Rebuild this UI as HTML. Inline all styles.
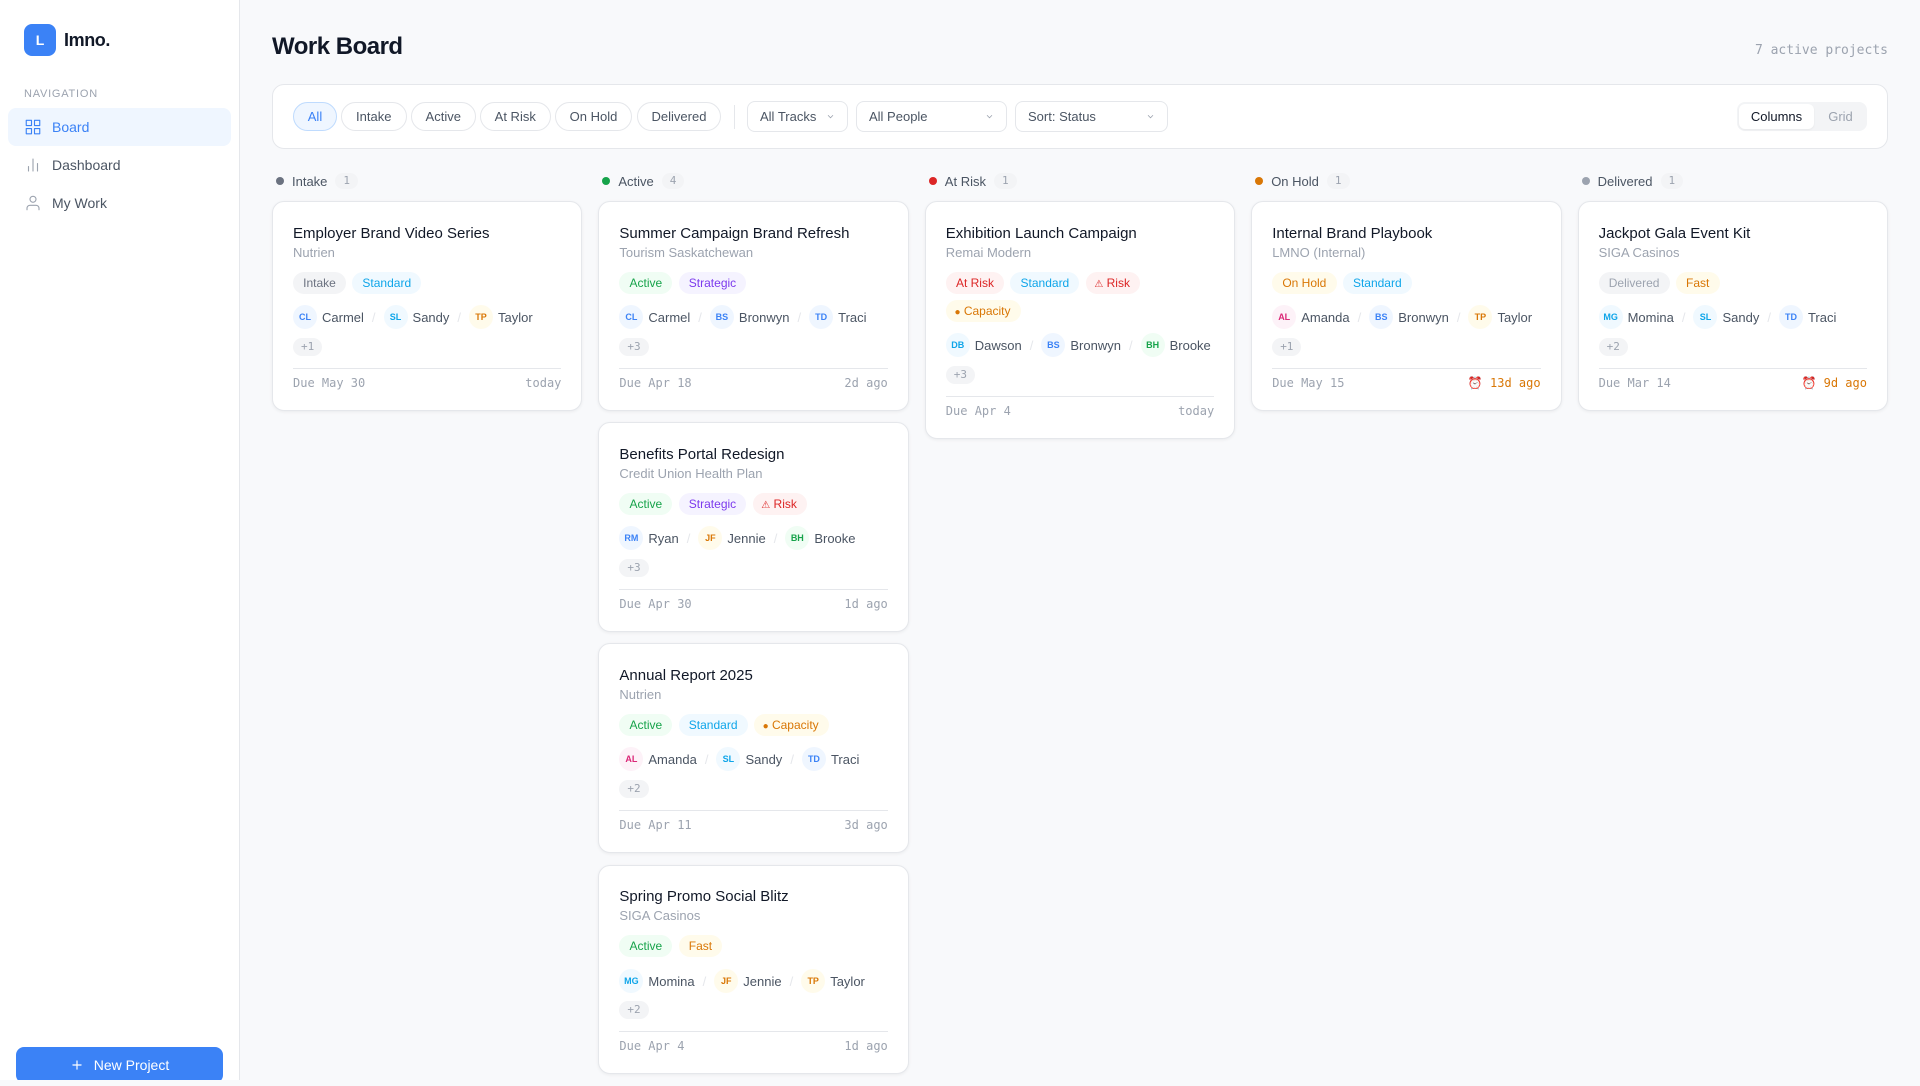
<!DOCTYPE html>
<html lang="en"><head><meta charset="utf-8"><title>Work Board</title>
<style>
*{box-sizing:border-box;margin:0;padding:0}
html,body{width:1920px;height:1080px;overflow:hidden;background:#f8f9fb;font-family:"Liberation Sans",sans-serif;color:#111827}
.side{position:absolute;left:0;top:0;width:240px;height:1080px;background:#fff;border-right:1px solid #e5e7eb;overflow:hidden}
.logo{position:absolute;left:24px;top:24px;width:32px;height:32px;border-radius:8px;background:#3b82f6;color:#fff;font-weight:700;font-size:14px;display:flex;align-items:center;justify-content:center}
.brand{position:absolute;left:64px;top:29px;font-size:18px;line-height:22px;font-weight:700;letter-spacing:-.4px}
.navl{position:absolute;left:24px;top:88px;font-size:11px;line-height:13px;letter-spacing:.77px;color:#9ca3af}
.nav{position:absolute;left:8px;width:223px;height:38px;border-radius:8px;display:flex;align-items:center;padding-left:16px;gap:10px;font-size:14px;color:#4b5563}
.nav svg{width:18px;height:18px;fill:none;stroke:#9ca3af;stroke-width:1.5;stroke-linecap:round;stroke-linejoin:round}
.nav.on{background:#eff6ff;color:#3b82f6}.nav.on svg{stroke:#3b82f6}
.new{position:absolute;left:16px;top:1047px;width:207px;height:36px;border-radius:8px;background:#3b82f6;color:#fff;font-size:14px;display:flex;align-items:center;justify-content:center;gap:10px}
.new svg{width:14px;height:14px;fill:none;stroke:#fff;stroke-width:2;stroke-linecap:round}
h1{position:absolute;left:272px;top:33px;font-size:24px;line-height:28px;font-weight:700;letter-spacing:-.5px}
.count{position:absolute;right:32px;top:43px;font:13px/15px "DejaVu Sans Mono",monospace;color:#9ca3af}
.bar{position:absolute;left:272px;top:84px;width:1616px;height:65px;background:#fff;border:1px solid #e5e7eb;border-radius:12px}
.p{position:absolute;top:17px;height:29px;border:1px solid #e5e7eb;border-radius:15px;font-size:13px;line-height:27px;text-align:center;color:#4b5563;background:#fff}
.p.on{background:#eff6ff;border-color:#bfdbfe;color:#3b82f6}
.div{position:absolute;left:461px;top:20px;width:1px;height:24px;background:#e5e7eb}
.s{position:absolute;top:16px;height:31px;border:1px solid #e5e7eb;border-radius:8px;font-size:13px;line-height:29px;padding-left:12px;color:#4b5563;background:#fff}
.s svg{position:absolute;right:13px;top:12px;width:7px;height:5px;fill:none;stroke:#9ca3af;stroke-width:1}
.seg{position:absolute;left:1464px;top:17px;width:130px;height:29px;background:#f3f4f6;border-radius:8px}
.seg b{position:absolute;top:2px;height:25px;font-weight:400;font-size:13px;line-height:25px;text-align:center;border-radius:6px}
.col{position:absolute;top:173px;width:310.4px}
.ch{height:16px;display:flex;align-items:center;padding-left:4px;gap:8px;font-size:13px;color:#4b5563;margin-bottom:12.3px}
.dot{width:8px;height:8px;border-radius:50%}
.n{font:11px/16px "DejaVu Sans Mono",monospace;color:#9ca3af;background:#f3f4f6;border-radius:8px;padding:0 8px;height:16px}
.card{background:#fff;border:1px solid #e5e7eb;border-radius:12px;box-shadow:0 1px 3px rgba(0,0,0,.06);padding:21.5px 20px 20px;margin-bottom:11.6px;height:209.5px}
.card.tall{height:237.5px}
.t{font-size:15px;line-height:20px;color:#111827;white-space:nowrap}
.c{font-size:13px;line-height:15px;margin-top:1px;color:#9ca3af;white-space:nowrap}
.tags{display:flex;flex-wrap:wrap;gap:6px 6.3px;margin-top:12px}
.tag{height:22px;line-height:22px;font-size:12px;padding:0 10.15px;border-radius:11px;white-space:nowrap}
.gy{background:#f3f4f6;color:#6b7280}.gl{background:#f3f4f6;color:#9ca3af}.sk{background:#f0f9ff;color:#0ea5e9}.gr{background:#f0fdf4;color:#16a34a}
.pu{background:#f5f3ff;color:#7c3aed}.rd{background:#fef2f2;color:#dc2626}.am{background:#fffbeb;color:#d97706}
.bl{background:#eff6ff;color:#3b82f6}.pk{background:#fdf2f8;color:#db2777}
.tag i{font-style:normal;font-size:10px;margin-left:-1.5px}
.pp{display:flex;align-items:center;gap:8px;margin-top:12px;height:24px;white-space:nowrap;font-size:13px;color:#4b5563}
.pe{display:flex;align-items:center;gap:5px}
.av{position:relative;top:-.5px;width:24px;height:24px;border-radius:50%;font-size:9px;font-weight:700;display:flex;align-items:center;justify-content:center}
.sl{color:#e5e7eb}
.mo{display:block;width:max-content;margin-top:8px;height:18px;font:11px/18px "DejaVu Sans Mono",monospace;color:#9ca3af;background:#f3f4f6;border-radius:9px;padding:0 8px}
.f{display:flex;justify-content:space-between;margin-top:12px;border-top:1px solid #e5e7eb;padding-top:7px;font:12px/14px "DejaVu Sans Mono",monospace;color:#9ca3af;white-space:nowrap}
.f .o{color:#d97706}
</style></head><body>
<aside class="side">
<div class="logo">L</div><div class="brand">Imno.</div><div class="navl">NAVIGATION</div>
<div class="nav on" style="top:108px"><svg viewBox="0 0 24 24"><rect x="3" y="3" width="7" height="7"/><rect x="14" y="3" width="7" height="7"/><rect x="14" y="14" width="7" height="7"/><rect x="3" y="14" width="7" height="7"/></svg>Board</div>
<div class="nav" style="top:146px"><svg viewBox="0 0 24 24"><path d="M18 20V10M12 20V4M6 20v-6"/></svg>Dashboard</div>
<div class="nav" style="top:184px"><svg viewBox="0 0 24 24"><path d="M20 21v-2a4 4 0 0 0-4-4H8a4 4 0 0 0-4 4v2"/><circle cx="12" cy="7" r="4"/></svg>My Work</div>
<div class="new"><svg viewBox="0 0 24 24"><path d="M12 5v14M5 12h14"/></svg>New Project</div>
</aside>
<h1>Work Board</h1><div class="count">7 active projects</div>
<div class="bar">
<div class="p on" style="left:20px;width:44px">All</div>
<div class="p" style="left:68px;width:65.5px">Intake</div>
<div class="p" style="left:138px;width:64.5px">Active</div>
<div class="p" style="left:207px;width:70.5px">At Risk</div>
<div class="p" style="left:282px;width:77px">On Hold</div>
<div class="p" style="left:364px;width:84px">Delivered</div>
<div class="div"></div>
<div class="s" style="left:474px;width:101px">All Tracks<svg viewBox="0 0 8 6"><path d="M1 1.5l3 3 3-3"/></svg></div>
<div class="s" style="left:583px;width:151px">All People<svg viewBox="0 0 8 6"><path d="M1 1.5l3 3 3-3"/></svg></div>
<div class="s" style="left:742px;width:153px">Sort: Status<svg viewBox="0 0 8 6"><path d="M1 1.5l3 3 3-3"/></svg></div>
<div class="seg"><b style="left:2px;width:75px;background:#fff;color:#111827;box-shadow:0 1px 2px rgba(0,0,0,.05)">Columns</b><b style="left:79px;width:49px;color:#9ca3af">Grid</b></div>
</div>

<div class="col" style="left:272px">
<div class="ch"><span class="dot" style="background:#6b7280"></span>Intake<span class="n">1</span></div>
<div class="card"><div class="t">Employer Brand Video Series</div><div class="c">Nutrien</div>
<div class="tags"><span class="tag gy">Intake</span><span class="tag sk">Standard</span></div>
<div class="pp"><span class="pe"><span class="av bl">CL</span>Carmel</span><span class="sl">/</span><span class="pe"><span class="av sk">SL</span>Sandy</span><span class="sl">/</span><span class="pe"><span class="av am">TP</span>Taylor</span></div><span class="mo">+1</span>
<div class="f"><span>Due May 30</span><span>today</span></div></div>
</div>

<div class="col" style="left:598.4px">
<div class="ch"><span class="dot" style="background:#16a34a"></span>Active<span class="n">4</span></div>
<div class="card"><div class="t">Summer Campaign Brand Refresh</div><div class="c">Tourism Saskatchewan</div>
<div class="tags"><span class="tag gr">Active</span><span class="tag pu">Strategic</span></div>
<div class="pp"><span class="pe"><span class="av bl">CL</span>Carmel</span><span class="sl">/</span><span class="pe"><span class="av bl">BS</span>Bronwyn</span><span class="sl">/</span><span class="pe"><span class="av bl">TD</span>Traci</span></div><span class="mo">+3</span>
<div class="f"><span>Due Apr 18</span><span>2d ago</span></div></div>
<div class="card"><div class="t">Benefits Portal Redesign</div><div class="c">Credit Union Health Plan</div>
<div class="tags"><span class="tag gr">Active</span><span class="tag pu">Strategic</span><span class="tag rd"><i>⚠</i> Risk</span></div>
<div class="pp"><span class="pe"><span class="av bl">RM</span>Ryan</span><span class="sl">/</span><span class="pe"><span class="av am">JF</span>Jennie</span><span class="sl">/</span><span class="pe"><span class="av gr">BH</span>Brooke</span></div><span class="mo">+3</span>
<div class="f"><span>Due Apr 30</span><span>1d ago</span></div></div>
<div class="card"><div class="t">Annual Report 2025</div><div class="c">Nutrien</div>
<div class="tags"><span class="tag gr">Active</span><span class="tag sk">Standard</span><span class="tag am"><i>●</i> Capacity</span></div>
<div class="pp"><span class="pe"><span class="av pk">AL</span>Amanda</span><span class="sl">/</span><span class="pe"><span class="av sk">SL</span>Sandy</span><span class="sl">/</span><span class="pe"><span class="av bl">TD</span>Traci</span></div><span class="mo">+2</span>
<div class="f"><span>Due Apr 11</span><span>3d ago</span></div></div>
<div class="card"><div class="t">Spring Promo Social Blitz</div><div class="c">SIGA Casinos</div>
<div class="tags"><span class="tag gr">Active</span><span class="tag am">Fast</span></div>
<div class="pp"><span class="pe"><span class="av sk">MG</span>Momina</span><span class="sl">/</span><span class="pe"><span class="av am">JF</span>Jennie</span><span class="sl">/</span><span class="pe"><span class="av am">TP</span>Taylor</span></div><span class="mo">+2</span>
<div class="f"><span>Due Apr 4</span><span>1d ago</span></div></div>
</div>

<div class="col" style="left:924.8px">
<div class="ch"><span class="dot" style="background:#dc2626"></span>At Risk<span class="n">1</span></div>
<div class="card tall"><div class="t">Exhibition Launch Campaign</div><div class="c">Remai Modern</div>
<div class="tags"><span class="tag rd">At Risk</span><span class="tag sk">Standard</span><span class="tag rd"><i>⚠</i> Risk</span><span class="tag am"><i>●</i> Capacity</span></div>
<div class="pp"><span class="pe"><span class="av sk">DB</span>Dawson</span><span class="sl">/</span><span class="pe"><span class="av bl">BS</span>Bronwyn</span><span class="sl">/</span><span class="pe"><span class="av gr">BH</span>Brooke</span></div><span class="mo">+3</span>
<div class="f"><span>Due Apr 4</span><span>today</span></div></div>
</div>

<div class="col" style="left:1251.2px">
<div class="ch"><span class="dot" style="background:#d97706"></span>On Hold<span class="n">1</span></div>
<div class="card"><div class="t">Internal Brand Playbook</div><div class="c">LMNO (Internal)</div>
<div class="tags"><span class="tag am">On Hold</span><span class="tag sk">Standard</span></div>
<div class="pp"><span class="pe"><span class="av pk">AL</span>Amanda</span><span class="sl">/</span><span class="pe"><span class="av bl">BS</span>Bronwyn</span><span class="sl">/</span><span class="pe"><span class="av am">TP</span>Taylor</span></div><span class="mo">+1</span>
<div class="f"><span>Due May 15</span><span class="o">⏰ 13d ago</span></div></div>
</div>

<div class="col" style="left:1577.6px">
<div class="ch"><span class="dot" style="background:#9ca3af"></span>Delivered<span class="n">1</span></div>
<div class="card"><div class="t">Jackpot Gala Event Kit</div><div class="c">SIGA Casinos</div>
<div class="tags"><span class="tag gl">Delivered</span><span class="tag am">Fast</span></div>
<div class="pp"><span class="pe"><span class="av sk">MG</span>Momina</span><span class="sl">/</span><span class="pe"><span class="av sk">SL</span>Sandy</span><span class="sl">/</span><span class="pe"><span class="av bl">TD</span>Traci</span></div><span class="mo">+2</span>
<div class="f"><span>Due Mar 14</span><span class="o">⏰ 9d ago</span></div></div>
</div>
</body></html>
